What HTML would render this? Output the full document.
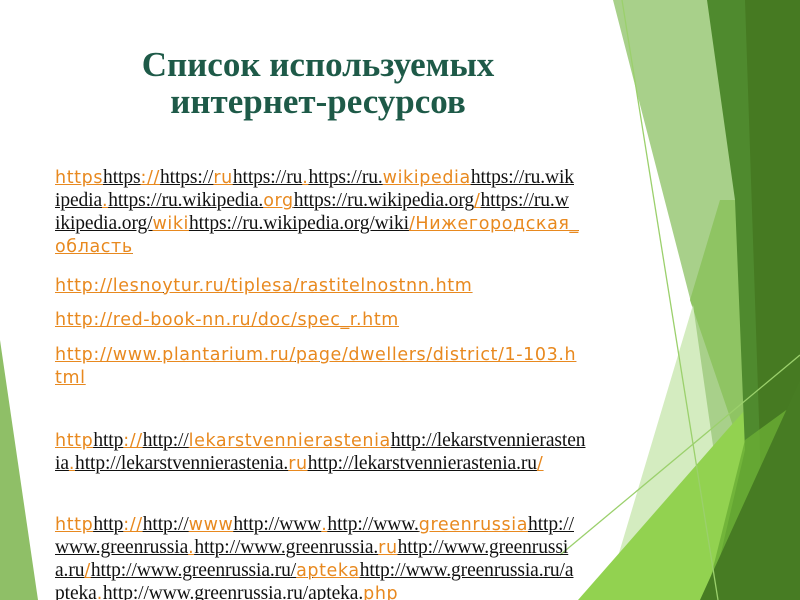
<!DOCTYPE html>
<html><head><meta charset="utf-8"><style>
html,body{margin:0;padding:0;width:800px;height:600px;overflow:hidden;background:#fff;position:relative}
svg.bg{position:absolute;left:0;top:0}
h1{position:absolute;left:0;width:636px;top:46px;margin:0;text-align:center;font:bold 35px/37px "Liberation Serif","Noto Serif CJK SC",serif;color:#1e5a48}
.l{position:absolute;left:55px;white-space:nowrap;line-height:20px;text-decoration:underline}
.o{color:#e8891f;font-family:"DejaVu Sans","Liberation Sans",sans-serif;font-size:17.5px;letter-spacing:0.6px;text-decoration:underline}
.b{color:#111;font-family:"Liberation Serif",serif;font-size:19.5px;letter-spacing:-0.1px;text-decoration:underline}
</style></head><body>
<svg class="bg" width="800" height="600" viewBox="0 0 800 600">
<polygon points="0,340 38,600 0,600" fill="#8fbf67"/>
<polygon points="613,0 760,0 760,600 700,600 693,310" fill="#a8d08a"/>
<polygon points="690,300 720,200 740,200 748,470" fill="#8fc463"/>
<polygon points="693,305 735,600 605,600" fill="#d4ecc0"/>
<polygon points="727,430 790,360 770,600 578,600" fill="#92d250"/>
<polygon points="707,0 800,0 800,600 710,600 745,450 735,200" fill="#4f8a2e"/>
<polygon points="745,0 800,0 800,600 765,600" fill="#467a22"/>
<polygon points="745,440 800,400 800,440 705,600 725,520" fill="#6aae35" opacity="0.8"/>
<polygon points="800,380 800,600 700,600" fill="#477c23"/>
<line x1="622" y1="0" x2="718" y2="600" stroke="#9bd06c" stroke-width="1.3"/>
<line x1="560" y1="555" x2="800" y2="355" stroke="#9bd06c" stroke-width="1.3"/>
</svg>
<h1>Список используемых<br>интернет-ресурсов</h1>
<div class="l" style="top:168px"><span class="o">https</span><span class="b">https</span><span class="o">://</span><span class="b">https://</span><span class="o">ru</span><span class="b">https://ru</span><span class="o">.</span><span class="b">https://ru.</span><span class="o">wikipedia</span><span class="b">https://ru.wik</span></div>
<div class="l" style="top:191px"><span class="b">ipedia</span><span class="o">.</span><span class="b">https://ru.wikipedia.</span><span class="o">org</span><span class="b">https://ru.wikipedia.org</span><span class="o">/</span><span class="b">https://ru.w</span></div>
<div class="l" style="top:214px"><span class="b">ikipedia.org/</span><span class="o">wiki</span><span class="b">https://ru.wikipedia.org/wiki</span><span class="o">/Нижегородская_</span></div>
<div class="l" style="top:237px"><span class="o">область</span></div>
<div class="l" style="top:276px"><span class="o">http://lesnoytur.ru/tiplesa/rastitelnostnn.htm</span></div>
<div class="l" style="top:310px"><span class="o">http://red-book-nn.ru/doc/spec_r.htm</span></div>
<div class="l" style="top:345px"><span class="o">http://www.plantarium.ru/page/dwellers/district/1-103.h</span></div>
<div class="l" style="top:368px"><span class="o">tml</span></div>
<div class="l" style="top:431px"><span class="o">http</span><span class="b">http</span><span class="o">://</span><span class="b">http://</span><span class="o">lekarstvennierastenia</span><span class="b">http://lekarstvennierasten</span></div>
<div class="l" style="top:454px"><span class="b">ia</span><span class="o">.</span><span class="b">http://lekarstvennierastenia.</span><span class="o">ru</span><span class="b">http://lekarstvennierastenia.ru</span><span class="o">/</span></div>
<div class="l" style="top:515px"><span class="o">http</span><span class="b">http</span><span class="o">://</span><span class="b">http://</span><span class="o">www</span><span class="b">http://www</span><span class="o">.</span><span class="b">http://www.</span><span class="o">greenrussia</span><span class="b">http://</span></div>
<div class="l" style="top:538px"><span class="b">www.greenrussia</span><span class="o">.</span><span class="b">http://www.greenrussia.</span><span class="o">ru</span><span class="b">http://www.greenrussi</span></div>
<div class="l" style="top:561px"><span class="b">a.ru</span><span class="o">/</span><span class="b">http://www.greenrussia.ru/</span><span class="o">apteka</span><span class="b">http://www.greenrussia.ru/a</span></div>
<div class="l" style="top:584px"><span class="b">pteka</span><span class="o">.</span><span class="b">http://www.greenrussia.ru/apteka.</span><span class="o">php</span></div>
</body></html>
